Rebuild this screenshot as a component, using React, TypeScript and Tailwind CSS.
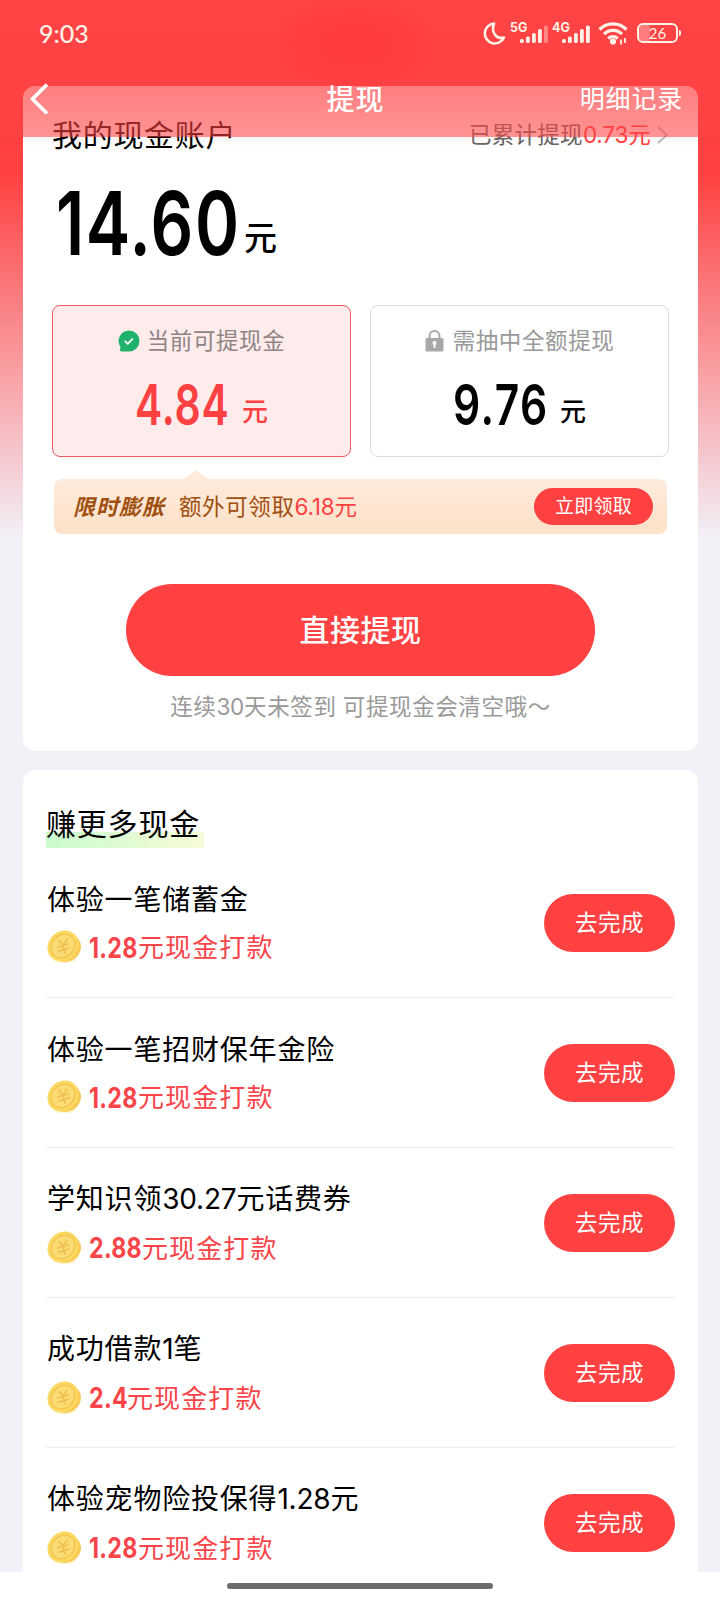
const tasks = [
  { title: '体验一笔储蓄金', amount: '1.28', width: 'w-[49px]' },
  { title: '体验一笔招财保年金险', amount: '1.28', width: 'w-[49px]' },
  { title: '学知识领30.27元话费券', amount: '2.88', width: 'w-[53px]' },
  { title: '成功借款1笔', amount: '2.4', width: 'w-[38px]' },
  { title: '体验宠物险投保得1.28元', amount: '1.28', width: 'w-[49px]' },
];

// digits are set tighter than the Chinese text around them
function Mixed({ text }: { text: string }) {
  return (
    <>
      {text.split(/([\d.]+)/).map((part, i) =>
        i % 2 ? <span key={i} className="font-['Inter'] tracking-[-0.2px]">{part}</span> : part
      )}
    </>
  );
}

function Coin() {
  return (
    <svg className="-mt-[2px] h-[37px] w-[37px] shrink-0" viewBox="0 0 36 36">
      <ellipse cx="18" cy="30.500" rx="11" ry="3.500" fill="#fdf0bd" opacity=".8" />
      <ellipse cx="20" cy="19.500" rx="14.500" ry="13" transform="rotate(-35 20 19.500)" fill="#f9cb55" />
      <ellipse cx="16.500" cy="17.500" rx="16" ry="14" transform="rotate(-45 16.500 17.500)" fill="#fbd862" />
      <ellipse cx="16.500" cy="17.500" rx="12.500" ry="10.500" transform="rotate(-45 16.500 17.500)" fill="#fbdc74" stroke="#f3c24a" strokeWidth="1.200" />
      <path
        d="M12.500 12l4 4.500 4-5.500M11.500 18.500l10-3M12.500 22.500l10-3M16.500 16.500l2 8"
        fill="none"
        stroke="#f0bf50"
        strokeWidth="1.600"
        strokeLinecap="round"
      />
    </svg>
  );
}

function Signal({ label, weak }: { label: string; weak?: boolean }) {
  return (
    <svg className="h-[24px] w-[40px]" viewBox="0 0 40 24" fill="#fff1e6">
      <text x="0" y="10.500" fontSize="12.500" fontWeight="700" fontFamily="Inter, sans-serif">{label}</text>
      <rect x="10" y="18" width="3.800" height="4" rx="1.500" />
      <rect x="16" y="15.500" width="3.800" height="6.500" rx="1.500" />
      <rect x="22" y="12" width="3.800" height="10" rx="1.500" />
      <rect x="28" y="8" width="3.800" height="14" rx="1.500" />
      <rect x="34" y="4.500" width="3.800" height="17.500" rx="1.500" opacity={weak ? 0.4 : 1} />
    </svg>
  );
}

function StatusBar() {
  return (
    <div className="flex h-[66px] items-center pl-[39px] pr-[39px] text-[#fff1e6]">
      <span className="text-[25px] font-medium leading-none">9:03</span>
      <div className="ml-auto flex items-center">
        <svg className="mr-[4px] h-[24px] w-[24px]" viewBox="0 0 24 24" fill="none" stroke="#fff1e6" strokeWidth="2.600" strokeLinejoin="round">
          <path d="M12 2.500A10 10 0 1 0 22 16.500C15 18.500 8.500 12 12 2.500z" />
        </svg>
        <Signal label="5G" weak />
        <span className="w-[2px]" />
        <Signal label="4G" />
        <svg className="ml-[6px] h-[24px] w-[30px]" viewBox="0 0 30 24" fill="none" stroke="#fff1e6" strokeWidth="3.200">
          <path d="M1.500 8.500a19 19 0 0 1 27 0" />
          <path d="M6 13.200a12.500 12.500 0 0 1 18 0" />
          <path d="M10.200 17.500a7 7 0 0 1 9.600 0" />
          <circle cx="15" cy="20.500" r="1.500" />
          <path d="M23 18.500v5M27 17v5" strokeWidth="1.800" />
        </svg>
        <div className="relative ml-[9px] flex h-[20px] w-[41px] items-center justify-center rounded-[6px] border-2 border-[#fff1e6]">
          <div className="absolute inset-y-0 left-0 w-[11px] rounded-l-[4px] bg-white/30" />
          <span className="relative text-[15px] leading-none">26</span>
        </div>
        <div className="ml-px h-[6px] w-[2px] rounded-r bg-[#fff1e6]" />
      </div>
    </div>
  );
}

function NavBar() {
  return (
    <div className="absolute inset-x-0 top-0 z-10 h-[137px]">
      <StatusBar />
      <div className="flex h-[66px] items-center justify-between pl-[29px] pr-[37px] text-white">
        <svg className="h-[32px] w-[102px]" viewBox="0 0 102 32" fill="none" stroke="white" strokeWidth="3.600">
          <path d="M18 1.500L3.500 16L18 30.500" />
        </svg>
        <h1 className="text-[28px] font-medium tracking-[1px]">提现</h1>
        <span className="text-[25px] tracking-[0.800px]">明细记录</span>
      </div>
    </div>
  );
}

function AccountCard() {
  return (
    <section className="h-[665px] rounded-[12px] bg-white px-[29px] pt-[28px]">
      <div className="flex h-[40px] items-center justify-between">
        <h2 className="text-[30px] leading-[38px] tracking-[0.700px]">我的现金账户</h2>
        <div className="flex items-center pt-px text-[22.500px] tracking-[0.300px] text-[#666]">
          已累计提现<span className="text-[#ff4142]"><Mixed text="0.73元" /></span>
          <svg className="ml-[6px] h-[18px] w-[12px]" viewBox="0 0 12 18" fill="none" stroke="#bbb" strokeWidth="1.800">
            <path d="M1 1l9 8-9 8" />
          </svg>
        </div>
      </div>

      <div className="mt-[25px] flex h-[88px] items-end text-black">
        <span className="ml-[4px] w-[188px] origin-left scale-x-[.76] font-['Inter'] text-[88px] font-semibold leading-[88px] tracking-[2px]">14.60</span>
        <span className="text-[33px] font-medium leading-[60px]">元</span>
      </div>

      <div className="mt-[38px] flex gap-[19px]">
        <div className="flex h-[152px] w-[299px] flex-col items-center rounded-[8px] border border-[#ef5a60] bg-[#feebec] pt-[17px]">
          <div className="flex h-[36px] items-center gap-[7px] text-[22.500px] tracking-[0.600px] text-[#8f8384]">
            <svg className="h-[22px] w-[22px]" viewBox="0 0 22 22">
              <path d="M11 0.500a10.500 10.500 0 1 1 0 21H3.500a1.500 1.500 0 0 1-1.400-2L2.500 17A10.500 10.500 0 0 1 11 .5z" fill="#1eb26b" />
              <path d="M6.800 10.800l3 3 5-5.200" fill="none" stroke="white" strokeWidth="1.800" />
            </svg>
            当前可提现金
          </div>
          <div className="mt-[18px] flex h-[56px] items-end text-[#ff4142]">
            <span className="w-[107px] origin-left scale-x-[.73] font-['Inter'] text-[56px] font-semibold leading-[56px] tracking-[1.200px]">4.84</span>
            <span className="text-[26px] font-medium leading-[44px]">元</span>
          </div>
        </div>
        <div className="flex h-[152px] w-[299px] flex-col items-center rounded-[8px] border border-[#ddd] pt-[17px]">
          <div className="flex h-[36px] items-center gap-[9px] text-[22.500px] tracking-[0.600px] text-[#999]">
            <svg className="h-[22px] w-[19px]" viewBox="0 0 19 22">
              <path d="M4.500 9V6a5 5 0 0 1 10 0v3" fill="none" stroke="#aaa" strokeWidth="2" />
              <rect x="0.500" y="8" width="18" height="13.500" rx="1.500" fill="#a8a8a8" />
              <circle cx="9.500" cy="13" r="2" fill="white" />
              <path d="M8.600 13h1.800v5H8.600z" fill="white" />
            </svg>
            需抽中全额提现
          </div>
          <div className="mt-[18px] flex h-[56px] items-end text-black">
            <span className="w-[107px] origin-left scale-x-[.76] font-['Inter'] text-[56px] font-semibold leading-[56px] tracking-[2px]">9.76</span>
            <span className="text-[26px] font-medium leading-[44px]">元</span>
          </div>
        </div>
      </div>

      {/* bonus strip with a small pointer to the selected box */}
      <div className="relative mx-[2px] mt-[22px] flex h-[55px] items-center rounded-[8px] bg-linear-to-b from-[#feebdc] to-[#fde1c8] pl-[19px] pr-[14px]">
        <svg className="absolute left-[128px] top-[-9px] h-[10px] w-[28px]" viewBox="0 0 28 10">
          <path d="M0 10L14 0l14 10z" fill="#feebdc" />
        </svg>
        <span className="text-[22px] font-bold italic tracking-[1px] text-[#a0500f]">限时膨胀</span>
        <span className="ml-[14px] text-[22.500px] tracking-[0.600px] text-[#a0500f]">
          额外可领取<span className="text-[#ff4142]"><Mixed text="6.18元" /></span>
        </span>
        <button className="ml-auto h-[37px] w-[119px] rounded-full bg-[#ff4142] text-[19px] tracking-[0.200px] text-white">立即领取</button>
      </div>

      <button className="mx-auto mt-[50px] block h-[92px] w-[469px] rounded-full bg-[#ff4142] pb-[2px] text-[30px] font-medium tracking-[0.500px] text-white">
        直接提现
      </button>
      <p className="mt-[14px] text-center text-[22.500px] leading-[34px] tracking-[0.600px] text-[#999]">
        <Mixed text="连续30天未签到 可提现金会清空哦～" />
      </p>
    </section>
  );
}

function TaskList() {
  return (
    <section className="mt-[19px] rounded-t-[12px] bg-white px-[23px] pt-[34px]">
      <h2 className="relative h-[44px] w-fit pr-[3px] text-[30px] leading-[39px] tracking-[0.800px] text-black">
        <span className="absolute bottom-0 left-0 h-[16px] w-[158px] bg-linear-to-r from-[#c9fbcf] to-[#f6fbd8]" />
        <span className="relative">赚更多现金</span>
      </h2>
      {tasks.map((task) => (
        <div key={task.title} className="flex h-[150px] items-center justify-between border-b border-[#eee]">
          <div className="pt-px">
            <div className="pl-px text-[28px] leading-[50px] tracking-[0.800px] text-black">
              <Mixed text={task.title} />
            </div>
            <div className="-mt-px flex h-[50px] items-center text-[26px] tracking-[1.100px] text-[#f9454a]">
              <Coin />
              <span className={`ml-[6px] origin-left scale-x-[.83] font-['Inter'] text-[28px] font-bold tracking-[0.300px] ${task.width}`}>
                {task.amount}
              </span>
              元现金打款
            </div>
          </div>
          <button className="h-[58px] w-[131px] rounded-full bg-[#ff4142] text-[22.500px] tracking-[0.500px] text-white">去完成</button>
        </div>
      ))}
    </section>
  );
}

export default function App() {
  return (
    <div className="relative h-[1600px] w-[720px] overflow-hidden bg-[#f2f1f8] font-['Lato','Noto_Sans_CJK_SC',sans-serif]">
      <div className="h-[1572px] overflow-hidden bg-[linear-gradient(180deg,#ff4446_0px,#ff4142_175px,#f2f1f8_540px)] pl-[23px] pr-[22px] pt-[86px]">
        <AccountCard />
        <TaskList />
      </div>
      <div className="absolute inset-x-0 top-0 h-[137px] bg-[linear-gradient(180deg,rgba(255,68,70,.85)_0px,rgba(255,65,66,.68)_86px,rgba(255,65,66,.57)_137px)] shadow-[0_2px_12px_rgba(80,0,0,.06)]" />
      {/* soft darker glow behind the status bar */}
      <div className="absolute inset-x-0 top-0 h-[86px] bg-[radial-gradient(90px_50px_at_355px_42px,rgba(255,52,56,.6),transparent)]" />
      <NavBar />
      <div className="flex h-[28px] items-center justify-center bg-white">
        <div className="h-[6px] w-[266px] rounded-full bg-[#6b6b6b]" />
      </div>
    </div>
  );
}
